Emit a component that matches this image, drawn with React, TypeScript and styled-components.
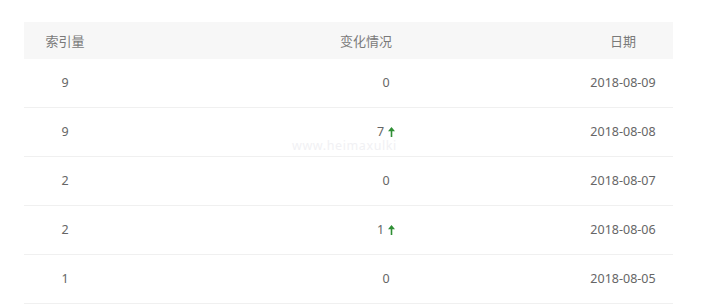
import React from "react";
import styled, { createGlobalStyle } from "styled-components";

const Global = createGlobalStyle`
  html, body { margin: 0; padding: 0; background: #ffffff; }
  body { font-family: "Noto Sans", "Noto Sans CJK SC", sans-serif; }
`;

const Page = styled.div`
  position: relative;
  width: 715px;
  height: 306px;
  padding: 22px 0 0 24px;
  box-sizing: border-box;
  overflow: hidden;
`;

const Table = styled.div`
  width: 649px;
  display: flex;
  flex-direction: column;
`;

const HeadRow = styled.div`
  display: grid;
  grid-template-columns: 82px 1fr 100px;
  height: 37px;
  align-items: center;
  background: #f7f7f7;
  color: #7a7a7a;
  font-size: 13px;
  font-family: "Noto Sans CJK SC", "Noto Sans", sans-serif;
`;

const Row = styled.div`
  display: grid;
  grid-template-columns: 82px 1fr 100px;
  height: 48px;
  align-items: center;
  border-bottom: 1px solid #f0f0f0;
  color: #666666;
  font-size: 12.5px;
`;

const Cell = styled.div<{ $shift?: number }>`
  text-align: center;
  padding-left: ${(p) => p.$shift ?? 0}px;
  display: flex;
  justify-content: center;
  align-items: center;
  gap: 4px;
  line-height: 10px;
`;

const Watermark = styled.div`
  position: absolute;
  left: 292px;
  top: 141px;
  font-size: 12.5px;
  line-height: 10px;
  letter-spacing: 0.6px;
  color: #f1f1f4;
  pointer-events: none;
`;

const Up = () => (
  <svg width="7" height="10" viewBox="0 0 7 10">
    <path d="M3.5 0 L7 4.2 L4.3 4.2 L4.3 10 L2.7 10 L2.7 4.2 L0 4.2 Z" fill="#2f8f35" />
  </svg>
);

const data = [
  { n: 9, c: 0, d: "2018-08-09" },
  { n: 9, c: 7, d: "2018-08-08" },
  { n: 2, c: 0, d: "2018-08-07" },
  { n: 2, c: 1, d: "2018-08-06" },
  { n: 1, c: 0, d: "2018-08-05" },
];

export default function App() {
  return (
    <Page>
      <Global />
      <Table>
        <HeadRow>
          <Cell>索引量</Cell>
          <Cell $shift={53}>变化情况</Cell>
          <Cell>日期</Cell>
        </HeadRow>
        {data.map((r, i) => (
          <Row key={i}>
            <Cell>{r.n}</Cell>
            <Cell $shift={93}>
              <span>{r.c}</span>
              {r.c > 0 && <Up />}
            </Cell>
            <Cell>{r.d}</Cell>
          </Row>
        ))}
      </Table>
      <Watermark>www.heimaxulki</Watermark>
    </Page>
  );
}
